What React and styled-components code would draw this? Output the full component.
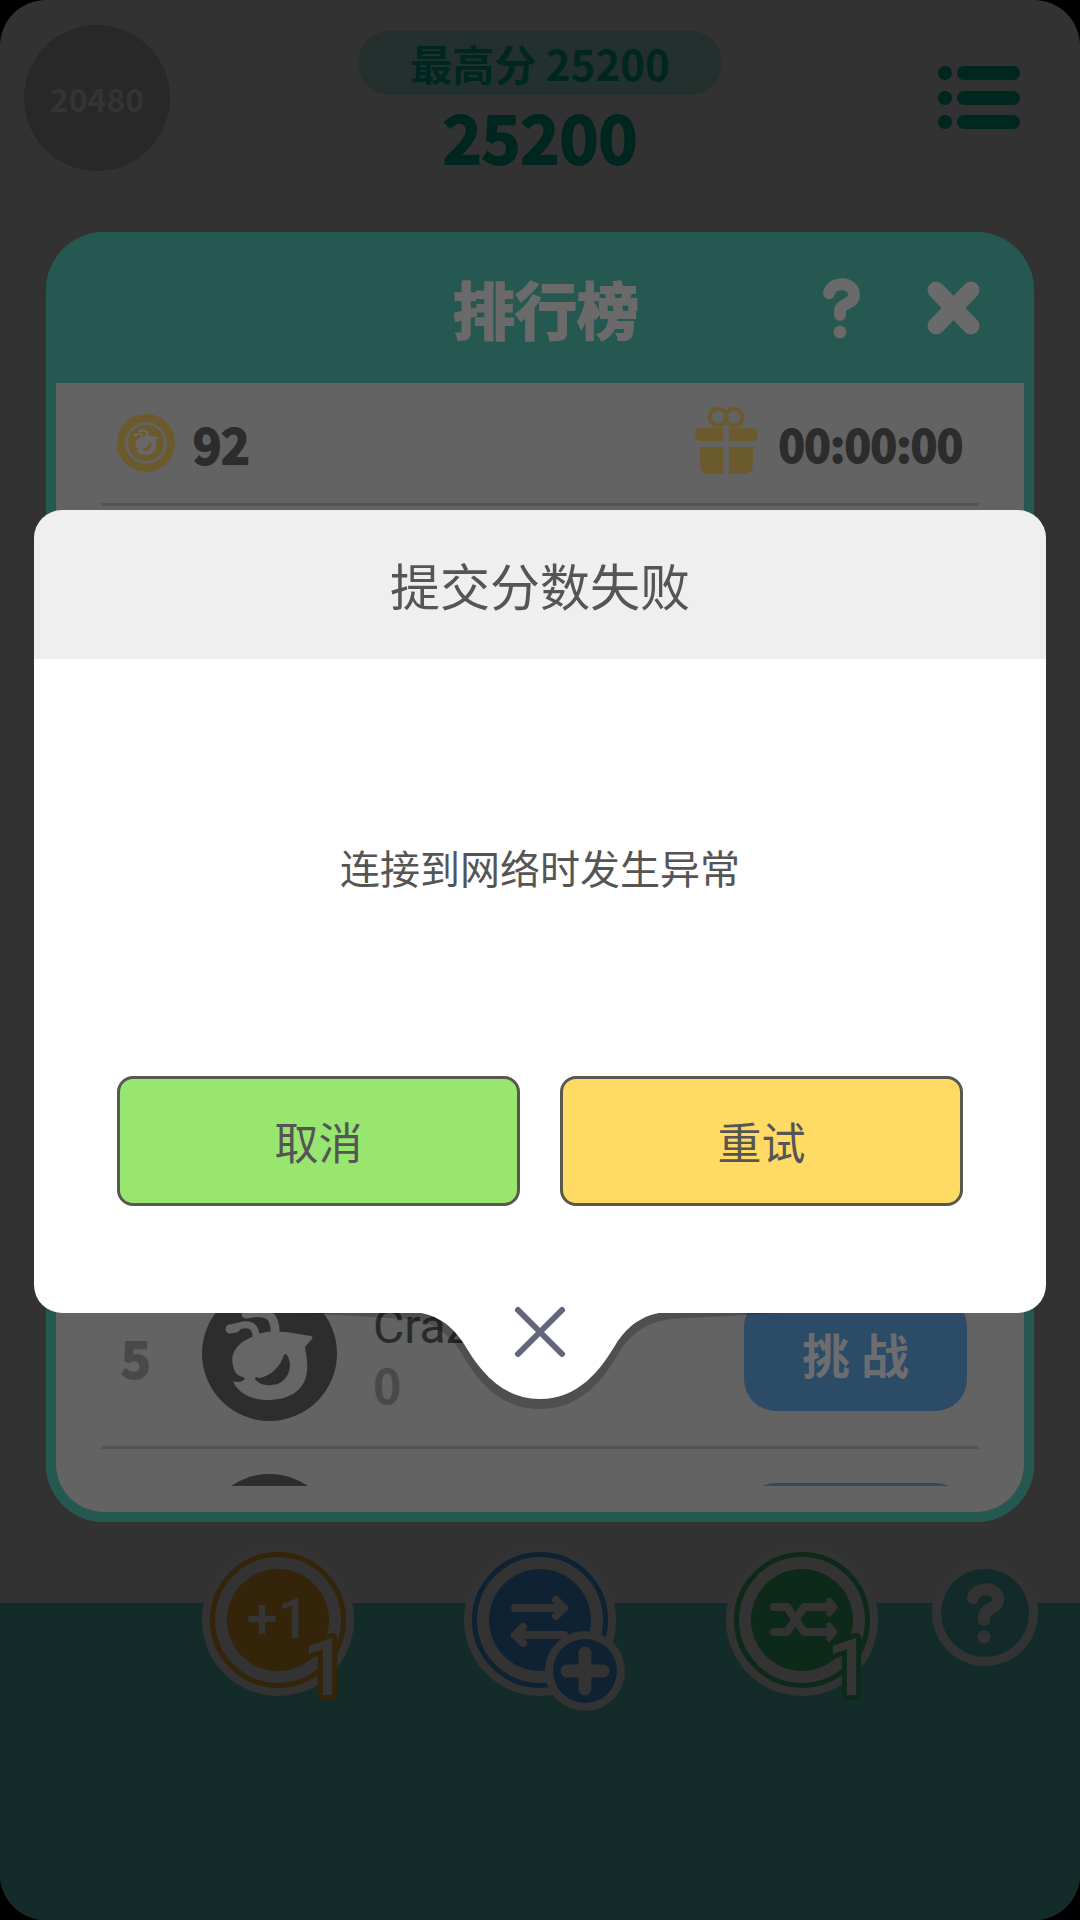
import React from "react";
import styled, { createGlobalStyle } from "styled-components";

const GlobalStyle = createGlobalStyle`
    *, *::before, *::after {
        box-sizing: border-box;
    }

    body {
        margin: 0;
        background: #000;
        font-family: "Noto Sans CJK SC", sans-serif;
    }

    h1, h2, p, ul {
        margin: 0;
        padding: 0;
    }

    button {
        border: 0;
        padding: 0;
        background: transparent;
        font-family: inherit;
        cursor: pointer;
    }

    svg {
        display: block;
        overflow: visible;
    }
`

// heavy type with softened corners
const roundedText = `
    font-weight: 700;
    -webkit-text-stroke: 2px currentColor;
    stroke-linejoin: round;
`

const Screen = styled.main`
    position: relative;
    min-height: 100vh;
    display: flex;
    flex-direction: column;
    overflow: hidden;
    border-radius: 46px;
    background: #323232;
`

const TopBar = styled.header`
    display: grid;
    grid-template-columns: 1fr auto 1fr;
    align-items: start;
    height: 232px;
    padding: 25px 24px 0;
`

const Tile = styled.div`
    display: flex;
    align-items: center;
    justify-content: center;
    width: 146px;
    height: 146px;
    border-radius: 50%;
    background: #282828;
    color: #343434;
    font-size: 32px;
    font-weight: 700;
`

const Scores = styled.div`
    display: flex;
    flex-direction: column;
    align-items: center;
    padding-top: 6px;
    color: #002620;
`

const Best = styled.p`
    height: 64px;
    padding: 0 52px;
    border-radius: 32px;
    background: #24302e;
    font-size: 42px;
    font-weight: 700;
    line-height: 64px;
`

const Current = styled.p`
    ${roundedText}

    font-size: 66px;
    line-height: 80px;
`

const MenuButton = styled.button`
    justify-self: end;
    margin: 41px 36px 0 0;
`

const Panel = styled.section`
    flex: 1;
    display: flex;
    flex-direction: column;
    margin: 0 46px;
    padding: 0 10px 36px;
    border-radius: 58px;
    background: linear-gradient(#245851 151px, #626362 151px);
    box-shadow: inset 0 0 0 10px #245851;
`

const PanelHeader = styled.div`
    display: grid;
    grid-template-columns: 1fr auto 1fr;
    align-items: center;
    height: 151px;
    padding: 10px 44px 10px 56px;
`

const PanelTitle = styled.h1`
    ${roundedText}

    grid-column: 2;
    color: #6b6a6a;
    font-size: 62px;
    line-height: 80px;
`

const PanelActions = styled.div`
    display: flex;
    justify-content: flex-end;
    gap: 66px;
`

const Stats = styled.div`
    display: flex;
    align-items: center;
    justify-content: space-between;
    height: 123px;
    margin: 0 45px;
    padding: 0 16px;
    border-bottom: 3px solid #535453;
`

const Stat = styled.div`
    ${roundedText}

    display: flex;
    align-items: center;
    gap: 18px;
    color: #2c2c2c;
    font-size: ${props => props.size}px;
    line-height: 60px;
`

const Ranking = styled.ul`
    flex: 1;
    display: flex;
    flex-direction: column;
    justify-content: flex-end;
    margin: 0 45px;
    list-style: none;
`

const Row = styled.li`
    display: grid;
    grid-template-columns: 101px 135px 1fr 223px;
    height: ${props => props.clipped ? 37 : 188}px;
    padding: 25px 12px 0 0;
    overflow: hidden;
    border-bottom: ${props => props.clipped ? 0 : '3px solid #535453'};
`

const Rank = styled.span`
    ${roundedText}

    padding: 30px 0 0 20px;
    color: #484949;
    font-size: 50px;
    line-height: 80px;
`

const Player = styled.div`
    padding: 11px 0 0 36px;
`

const PlayerName = styled.p`
    color: #2a2a2a;
    font-family: Roboto, sans-serif;
    font-size: 48px;
    line-height: 60px;
`

const PlayerScore = styled.p`
    color: #484949;
    font-size: 48px;
    font-weight: 700;
    line-height: 52px;
`

const Challenge = styled.button`
    height: 116px;
    margin-top: 9px;
    border-radius: 32px;
    background: #2b4b67;
    color: #6b6d70;
    font-size: 48px;
    font-weight: 700;
`

const Dock = styled.footer`
    display: grid;
    grid-template-columns: 1fr auto 1fr;
    align-items: start;
    height: 398px;
    padding-top: 22px;
    background: linear-gradient(#323232 81px, #142c29 81px);
`

const Boosts = styled.div`
    grid-column: 2;
    display: flex;
    gap: 110px;
`

const HelpButton = styled.button`
    justify-self: start;
    margin: 16px 0 0 54px;
`

const Overlay = styled.div`
    position: absolute;
    inset: 0;
    display: flex;
    align-items: center;
    justify-content: center;
    padding: 0 34px;
`

const Dialog = styled.section`
    width: 100%;
`

const DialogTitle = styled.h2`
    border-radius: 28px 28px 0 0;
    background: #efefef;
    color: #555;
    font-size: 50px;
    font-weight: 400;
    line-height: 149px;
    text-align: center;
`

const DialogBody = styled.div`
    padding: 0 83px 107px;
    border-radius: 0 0 28px 28px;
    background: #fff;
`

const Message = styled.p`
    color: #555;
    font-size: 40px;
    line-height: 417px;
    text-align: center;
`

const DialogActions = styled.div`
    display: flex;
    gap: 40px;
`

const ActionButton = styled.button`
    flex: 1;
    height: 130px;
    border: 3px solid #58584f;
    border-radius: 16px;
    background: ${props => props.color};
    color: #555;
    font-size: 44px;
`

const Tail = styled.div`
    display: grid;
    justify-items: center;
    height: 97px;

    > * {
        grid-area: 1 / 1;
    }
`

const CloseButton = styled.button`
    height: 60px;
    margin-top: -11px;
`

const MenuIcon = () => (
    <svg width="82" height="64" fill="#002620">
        {[0, 25, 49].map(y => (
            <g key={y}>
                <circle cx="7" cy={y + 7} r="7" />
                <rect x="19" y={y} width="63" height="14" rx="7" />
            </g>
        ))}
    </svg>
)

const QuestionIcon = ({ color = '#6b6a6a' }) => (
    <svg width="39" height="60" viewBox="0 0 39 60">
        <path
            d="M7 15C10 3 32 3 32 17C32 27 18 24 18 34V37"
            fill="none"
            stroke={color}
            strokeWidth="12"
            strokeLinecap="round"
            strokeLinejoin="round"
        />
        <circle cx="18" cy="54" r="6.500" fill={color} />
    </svg>
)

const CrossIcon = () => (
    <svg width="53" height="54" viewBox="0 0 53 54">
        <path d="M9 9L44 45M44 9L9 45" stroke="#6b6a6a" strokeWidth="17" strokeLinecap="round" />
    </svg>
)

const Bird = ({ color, hole }) => (
    <>
        <g fill="none" stroke={color} strokeLinecap="round">
            <path d="M54 54C55 38 46 35 29 43" strokeWidth="7" />
            <path d="M28 43L34 42" strokeWidth="9" />
            <path d="M73 48C74 28 64 24 44 28" strokeWidth="9" />
        </g>
        <path
            d="M53 50C60 45 72 45 84 46L109 50Q112 51 109 54L103 61C104 68 106 76 105 85C103 106 85 114 66 114C48 114 35 106 31 95C35 97 40 96 43 93C41 90 37 91 34 87C27 76 28 58 53 50Z"
            fill={color}
        />
        <path d="M82 69Q83 67 85 69C92 80 86 98 70 99C62 100 56 97 53 93C53 91 55 91 57 92C69 90 78 81 82 69Z" fill={hole} />
    </>
)

const Avatar = () => (
    <svg width="135" height="135" viewBox="0 0 135 135">
        <circle cx="67.500" cy="67.500" r="67.500" fill="#2d2d2d" />
        <Bird color="#656665" hole="#2d2d2d" />
    </svg>
)

const CoinIcon = () => (
    <svg width="58" height="60" viewBox="0 0 58 60">
        <circle cx="29" cy="30" r="25" fill="none" stroke="#6b5a2c" strokeWidth="8" />
        <circle cx="29" cy="30" r="18" fill="#6b5a2c" />
        <g transform="translate(10 10) scale(0.28)">
            <Bird color="#686866" hole="#6b5a2c" />
        </g>
    </svg>
)

const GiftIcon = () => (
    <svg width="66" height="72" viewBox="0 0 66 72" fill="#6b5a2c">
        <g fill="none" stroke="#6b5a2c" strokeWidth="4">
            <circle cx="23" cy="10" r="8.500" />
            <circle cx="39" cy="10" r="8.500" />
        </g>
        <path d="M7 21H28V34H5Q0 34 0 27Q0 21 7 21ZM34 21H56Q63 21 63 27Q63 34 58 34H34Z" />
        <path d="M5 40H28V67H14Q5 67 5 56ZM34 40H58V56Q58 67 49 67H34Z" />
    </svg>
)

const BoostIcon = ({ color, children }) => (
    <svg width="152" height="152" viewBox="0 0 152 152">
        <circle cx="76" cy="76" r="76" fill="#343333" />
        <circle cx="76" cy="76" r="65.500" fill="none" stroke={color} strokeWidth="5" />
        <circle cx="76" cy="76" r="51" fill={color} />
        {children}
    </svg>
)

const BoostText = styled.text`
    font-family: Roboto, sans-serif;
    font-weight: 500;
    text-anchor: middle;
    fill: #363535;
`

const Count = ({ color, children }) => (
    <BoostText
        x="123"
        y="151"
        fontSize="80"
        stroke={color}
        strokeWidth="10"
        strokeLinejoin="round"
        paintOrder="stroke"
    >
        {children}
    </BoostText>
)

const PlusOneIcon = () => (
    <BoostIcon color="#33240a">
        <BoostText x="76" y="94" fontSize="56">+1</BoostText>
        <Count color="#33240a">1</Count>
    </BoostIcon>
)

const SwapIcon = () => (
    <BoostIcon color="#0f2233">
        <g fill="none" stroke="#343333" strokeWidth="8" strokeLinecap="round" strokeLinejoin="round">
            <path d="M51 64H100M92 56L100 64L92 72" />
            <path d="M100 91H51M59 83L51 91L59 99" />
        </g>
        <circle cx="121" cy="127" r="40" fill="#343333" />
        <circle cx="121" cy="127" r="32" fill="#0f2233" />
        <path d="M103 127H139M121 109V145" stroke="#343333" strokeWidth="13" strokeLinecap="round" />
    </BoostIcon>
)

const ShuffleIcon = () => (
    <BoostIcon color="#0d2919">
        <g fill="none" stroke="#343333" strokeWidth="8" strokeLinecap="round" strokeLinejoin="round">
            <path d="M48 63H61L78 88H102" />
            <path d="M48 88H61L78 63H102" />
            <path d="M103 56L109 63L103 70ZM103 81L109 88L103 95Z" fill="#343333" strokeWidth="5" />
        </g>
        <Count color="#0d2919">1</Count>
    </BoostIcon>
)

const HelpIcon = () => (
    <svg width="106" height="106" viewBox="0 0 106 106">
        <circle cx="53" cy="53" r="53" fill="#343333" />
        <circle cx="53" cy="53" r="44" fill="#122b2a" />
        <g transform="translate(34 23)">
            <QuestionIcon color="#343333" />
        </g>
    </svg>
)

const TailShape = () => (
    <svg width="520" height="97" viewBox="0 0 520 97">
        <path
            d="M20 0L128 6C152 8 168 20 180 38C197 68 220 96 260 96C300 96 323 68 340 38C352 20 368 8 392 6L500 0Z"
            fill="rgba(0, 0, 0, 0.2)"
        />
        <path
            d="M128 -1C155 -1 172 12 184 31C200 58 222 86 260 86C298 86 320 58 336 31C348 12 365 -1 392 -1Z"
            fill="#fff"
        />
    </svg>
)

const ThinCrossIcon = () => (
    <svg width="52" height="52" viewBox="0 0 52 52">
        <path d="M4 4L48 48M48 4L4 48" stroke="#63657a" strokeWidth="6" strokeLinecap="round" />
    </svg>
)

const App = () => (
    <Screen>
        <GlobalStyle />
        <TopBar>
            <Tile>20480</Tile>
            <Scores>
                <Best>最高分 25200</Best>
                <Current>25200</Current>
            </Scores>
            <MenuButton aria-label="菜单"><MenuIcon /></MenuButton>
        </TopBar>
        <Panel>
            <PanelHeader>
                <PanelTitle>排行榜</PanelTitle>
                <PanelActions>
                    <button aria-label="帮助"><QuestionIcon /></button>
                    <button aria-label="关闭"><CrossIcon /></button>
                </PanelActions>
            </PanelHeader>
            <Stats>
                <Stat size={48}><CoinIcon />92</Stat>
                <Stat size={44}><GiftIcon />00:00:00</Stat>
            </Stats>
            <Ranking>
                <Row>
                    <Rank>5</Rank>
                    <Avatar />
                    <Player>
                        <PlayerName>Craz</PlayerName>
                        <PlayerScore>0</PlayerScore>
                    </Player>
                    <Challenge>挑 战</Challenge>
                </Row>
                <Row clipped>
                    <span />
                    <Avatar />
                    <span />
                    <Challenge aria-label="挑战" />
                </Row>
            </Ranking>
        </Panel>
        <Dock>
            <Boosts>
                <button aria-label="加一"><PlusOneIcon /></button>
                <button aria-label="交换"><SwapIcon /></button>
                <button aria-label="打乱"><ShuffleIcon /></button>
            </Boosts>
            <HelpButton aria-label="帮助"><HelpIcon /></HelpButton>
        </Dock>
        <Overlay>
            <Dialog role="dialog" aria-labelledby="dialog-title">
                <DialogTitle id="dialog-title">提交分数失败</DialogTitle>
                <DialogBody>
                    <Message>连接到网络时发生异常</Message>
                    <DialogActions>
                        <ActionButton color="#98e66f">取消</ActionButton>
                        <ActionButton color="#ffda65">重试</ActionButton>
                    </DialogActions>
                </DialogBody>
                <Tail>
                    <TailShape />
                    <CloseButton aria-label="关闭"><ThinCrossIcon /></CloseButton>
                </Tail>
            </Dialog>
        </Overlay>
    </Screen>
)

export default App;
